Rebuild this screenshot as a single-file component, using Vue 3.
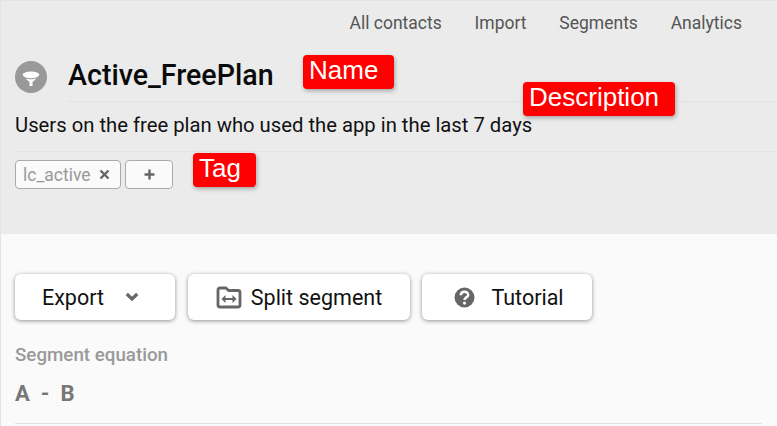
<template>
  <div class="page">
    <header class="head">
      <nav class="nav">
        <a v-for="item in nav" :key="item">{{ item }}</a>
      </nav>
      <div class="title-row">
        <span class="badge">
          <svg width="20" height="20" viewBox="0 0 20 20"><ellipse cx="10" cy="7.800" rx="8.300" ry="3.400" fill="#fff"/><path fill="#fff" d="M4.500 11.500C6 12 8 12.200 10 12.200s4-.2 5.500-.7L11.500 15V19H8.500V15Z"/></svg>
        </span>
        <h1>Active_FreePlan</h1>
      </div>
      <p class="desc">Users on the free plan who used the app in the last 7 days</p>
      <div class="tags">
        <span class="tag">lc_active
          <svg width="11" height="11" viewBox="0 0 11 11"><path d="M1.500 1.500l8 8M9.500 1.500l-8 8" stroke="#666" stroke-width="2.400"/></svg>
        </span>
        <span class="add">
          <svg width="11" height="11" viewBox="0 0 11 11"><path d="M5.500.5v10M.5 5.500h10" stroke="#666" stroke-width="2.400"/></svg>
        </span>
      </div>
      <span class="note n-name">Name</span>
      <span class="note n-desc">Description</span>
      <span class="note n-tag">Tag</span>
    </header>
    <main class="body">
      <div class="actions">
        <button class="btn export">Export
          <svg width="14" height="10" viewBox="0 0 14 10"><path d="M1.800 2l5.200 5 5.200-5" fill="none" stroke="#666" stroke-width="3.200"/></svg>
        </button>
        <button class="btn split">
          <svg width="26" height="24" viewBox="0 0 26 24"><path fill="none" stroke="#666" stroke-width="2.800" stroke-linejoin="round" d="M2 5a2 2 0 0 1 2-2h6l2.500 2.500H22a2 2 0 0 1 2 2V20a2 2 0 0 1-2 2H4a2 2 0 0 1-2-2Z"/><path fill="#666" d="M5.500 14l4-4v3h7v-3l4 4-4 4v-3h-7v3Z"/></svg>
          Split segment
        </button>
        <button class="btn tutorial">
          <svg width="21" height="21" viewBox="0 0 20 20"><circle cx="10" cy="10" r="9.500" fill="#666"/><path fill="none" stroke="#fff" stroke-width="2.400" d="M6.500 7.800c0-4.400 7-4.400 7-.3 0 2.400-3.500 2.300-3.500 4.800"/><circle cx="10" cy="15.300" r="1.500" fill="#fff"/></svg>
          Tutorial
        </button>
      </div>
      <h2>Segment equation</h2>
      <div class="eq"><span>A</span><span>-</span><span>B</span></div>
      <div class="rule"></div>
    </main>
  </div>
</template>

<script setup>
const nav = ['All contacts', 'Import', 'Segments', 'Analytics']
</script>

<style>
html, body { margin: 0; background: #fafafa; overflow: hidden; }
</style>

<style scoped>
.page { width: 777px; height: 426px; box-sizing: border-box; border-left: 1px solid #e4e4e4; overflow: hidden; font-family: Roboto, sans-serif; color: #111; }
.head { position: relative; height: 234px; box-sizing: border-box; background: #ebebeb; border-top: 1px solid #e4e4e4; padding-left: 14px; }
.nav { display: flex; justify-content: flex-end; gap: 32.800px; padding: 12px 35px 0 0; font-size: 17.500px; line-height: 20px; color: #555; }
.title-row { display: flex; align-items: center; margin-top: 12px; height: 57px; }
.badge { width: 32px; height: 32px; border-radius: 50%; background: #999; display: flex; align-items: center; justify-content: center; flex: none; margin-top: 7px; }
h1 { flex: 1; margin: 0 0 0 21px; height: 57px; box-sizing: border-box; border-bottom: 1px solid #e2e2e2; font-size: 28.600px; line-height: 60px; font-weight: 500; color: #0a0a0a; }
.desc { margin: 0; height: 50px; box-sizing: border-box; padding-top: 11px; border-bottom: 1px solid #e2e2e2; font-size: 20.250px; line-height: 24px; }
.tags { display: flex; gap: 4px; margin-top: 8px; }
.tag, .add { height: 29px; box-sizing: border-box; display: flex; align-items: center; justify-content: center; border: 1px solid #aaa; border-radius: 4px; background: #fafafa; }
.tag { width: 106px; padding-left: 7px; justify-content: space-between; padding-right: 10px; font-size: 17.500px; color: #999; }
.add { width: 48px; }
.note { position: absolute; box-sizing: border-box; background: #f00; color: #fff; border-radius: 4px; box-shadow: 1px 2px 4px rgba(0,0,0,.3); font-family: "Liberation Sans", sans-serif; font-size: 26px; line-height: 30px; padding: 0 6px; }
.n-name { left: 302px; top: 54px; width: 91px; height: 34px; }
.n-desc { left: 522px; top: 81px; width: 152px; height: 34px; }
.n-tag { left: 192px; top: 152px; width: 63px; height: 34px; }
.body { padding: 40px 15px 0 14px; background: #fafafa; }
.actions { display: flex; gap: 13px; }
.btn { height: 46px; border: 0; border-radius: 6px; background: #fff; box-shadow: 0 1px 4px rgba(0,0,0,.42); display: flex; align-items: center; justify-content: center; font-family: Roboto, sans-serif; font-size: 21.500px; color: #111; padding: 0; }
.export { width: 160px; gap: 21px; padding-right: 9px; box-sizing: border-box; }
.split { width: 222px; gap: 9px; }
.tutorial { width: 170px; gap: 16px; margin-left: -1px; padding-left: 4px; box-sizing: border-box; }
h2 { margin: 24px 0 0; font-size: 18.750px; line-height: 22px; font-weight: 500; color: #999; }
.eq { display: flex; gap: 11px; margin-top: 15px; font-size: 22px; line-height: 26px; font-weight: 700; color: #777; }
.rule { margin-top: 16px; height: 1px; background: #e2e2e2; }
</style>
